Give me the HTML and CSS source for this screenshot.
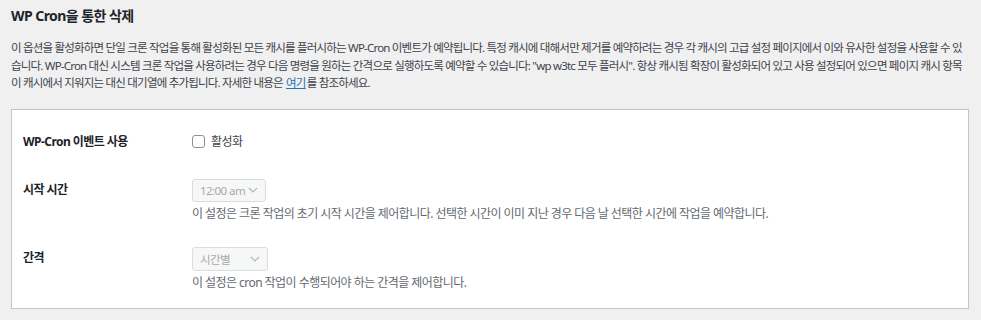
FILE: index.html
```html
<!DOCTYPE html>
<html lang="ko">

<head>
    <meta charset="UTF-8">
    <title>W3 Total Cache - WP Cron을 통한 삭제</title>
    <link rel="stylesheet" href="styles.css">
</head>

<body>
    <div class="wrap">
        <h3 class="section-title">WP Cron을 통한 삭제</h3>
        <p class="section-desc">이 옵션을 활성화하면 단일 크론 작업을 통해 활성화된 모든 캐시를 플러시하는 WP-Cron 이벤트가 예약됩니다. 특정 캐시에 대해서만 제거를 예약하려는 경우 각 캐시의 고급 설정 페이지에서 이와 유사한 설정을 사용할 수 있습니다. WP-Cron 대신 시스템 크론 작업을 사용하려는 경우 다음 명령을 원하는 간격으로 실행하도록 예약할 수 있습니다: "wp w3tc 모두 플러시". 항상 캐시됨 확장이 활성화되어 있고 사용 설정되어 있으면 페이지 캐시 항목이 캐시에서 지워지는 대신 대기열에 추가됩니다. 자세한 내용은 <a href="#">여기</a>를 참조하세요.</p>

        <div class="settings-box">
            <!-- 이벤트 사용 -->
            <div class="setting-row">
                <div class="setting-label">WP-Cron 이벤트 사용</div>
                <div class="setting-field">
                    <label class="check-label">
                        <input type="checkbox" class="check">
                        <span>활성화</span>
                    </label>
                </div>
            </div>

            <!-- 시작 시간 -->
            <div class="setting-row row-select">
                <div class="setting-label">시작 시간</div>
                <div class="setting-field">
                    <div class="fake-select select-time">
                        <span>12:00 am</span>
                        <svg width="10" height="6" viewBox="0 0 10 6"><path d="M1 1l4 4 4-4" fill="none" stroke="#b4b7ba" stroke-width="1.2"/></svg>
                    </div>
                    <p class="field-desc">이 설정은 크론 작업의 초기 시작 시간을 제어합니다. 선택한 시간이 이미 지난 경우 다음 날 선택한 시간에 작업을 예약합니다.</p>
                </div>
            </div>

            <!-- 간격 -->
            <div class="setting-row row-select">
                <div class="setting-label">간격</div>
                <div class="setting-field">
                    <div class="fake-select select-interval">
                        <span>시간별</span>
                        <svg width="10" height="6" viewBox="0 0 10 6"><path d="M1 1l4 4 4-4" fill="none" stroke="#b4b7ba" stroke-width="1.2"/></svg>
                    </div>
                    <p class="field-desc">이 설정은 cron 작업이 수행되어야 하는 간격을 제어합니다.</p>
                </div>
            </div>
        </div>
    </div>
</body>

</html>
```

FILE: styles.css
```css
/* 기본 설정 */
html,
body {
    margin: 0;
    padding: 0;
}

body {
    background-color: #f0f0f1;
    color: #3c434a;
    font-family: "Noto Sans", "Noto Sans CJK KR", sans-serif;
    font-size: 12px;
    letter-spacing: -0.55px;
}

.wrap {
    padding: 0 11px;
}

/* 섹션 제목 */
.section-title {
    margin: 0;
    padding-top: 6px;
    font-size: 14px;
    line-height: 20px;
    color: #1d2327;
}

/* 설명 문단: 한글 폭을 원본에 맞추기 위해 조금 좁게 */
.section-desc {
    margin: 13px 0 0 0;
    width: 956px;
    font-size: 11.5px;
    letter-spacing: -0.8px;
    line-height: 17.5px;
}

.section-desc a {
    color: #2271b1;
    padding: 0 1px;
}

/* 설정 박스 */
.settings-box {
    margin-top: 17px;
    width: 958px;
    background-color: #fff;
    border: 1px solid #c3c4c7;
    box-sizing: border-box;
    padding: 22px 0 16px 11px;
}

.setting-row {
    display: flex;
}

.row-select {
    margin-top: 27px;
}

.row-select + .row-select {
    margin-top: 24px;
}

.setting-label {
    width: 169px;
    flex-shrink: 0;
    font-weight: bold;
    color: #1d2327;
    line-height: 20px;
}

.row-select .setting-label {
    line-height: 22px;
}

.setting-field {
    flex: 1;
}

/* 체크박스 */
.check-label {
    display: flex;
    align-items: center;
    gap: 6px;
    line-height: 20px;
}

.check {
    -webkit-appearance: none;
    appearance: none;
    margin: 0;
    width: 13px;
    height: 13px;
    border: 1px solid #8c8f94;
    border-radius: 3px;
    background: #fff;
    box-sizing: border-box;
}

/* 비활성 셀렉트 */
.fake-select {
    display: flex;
    align-items: center;
    height: 23px;
    box-sizing: border-box;
    padding: 0 7px;
    border: 1px solid #dcdcde;
    border-radius: 3px;
    background-color: #f6f7f7;
    color: #a7aaad;
    font-size: 11.5px;
    white-space: nowrap;
    margin-bottom: 3px;
}

.fake-select svg {
    margin-left: auto;
}

.select-time {
    width: 74px;
}

.select-interval {
    width: 76px;
    height: 24px;
}

.field-desc {
    margin: 0;
    line-height: 18px;
    color: #646970;
}
```
